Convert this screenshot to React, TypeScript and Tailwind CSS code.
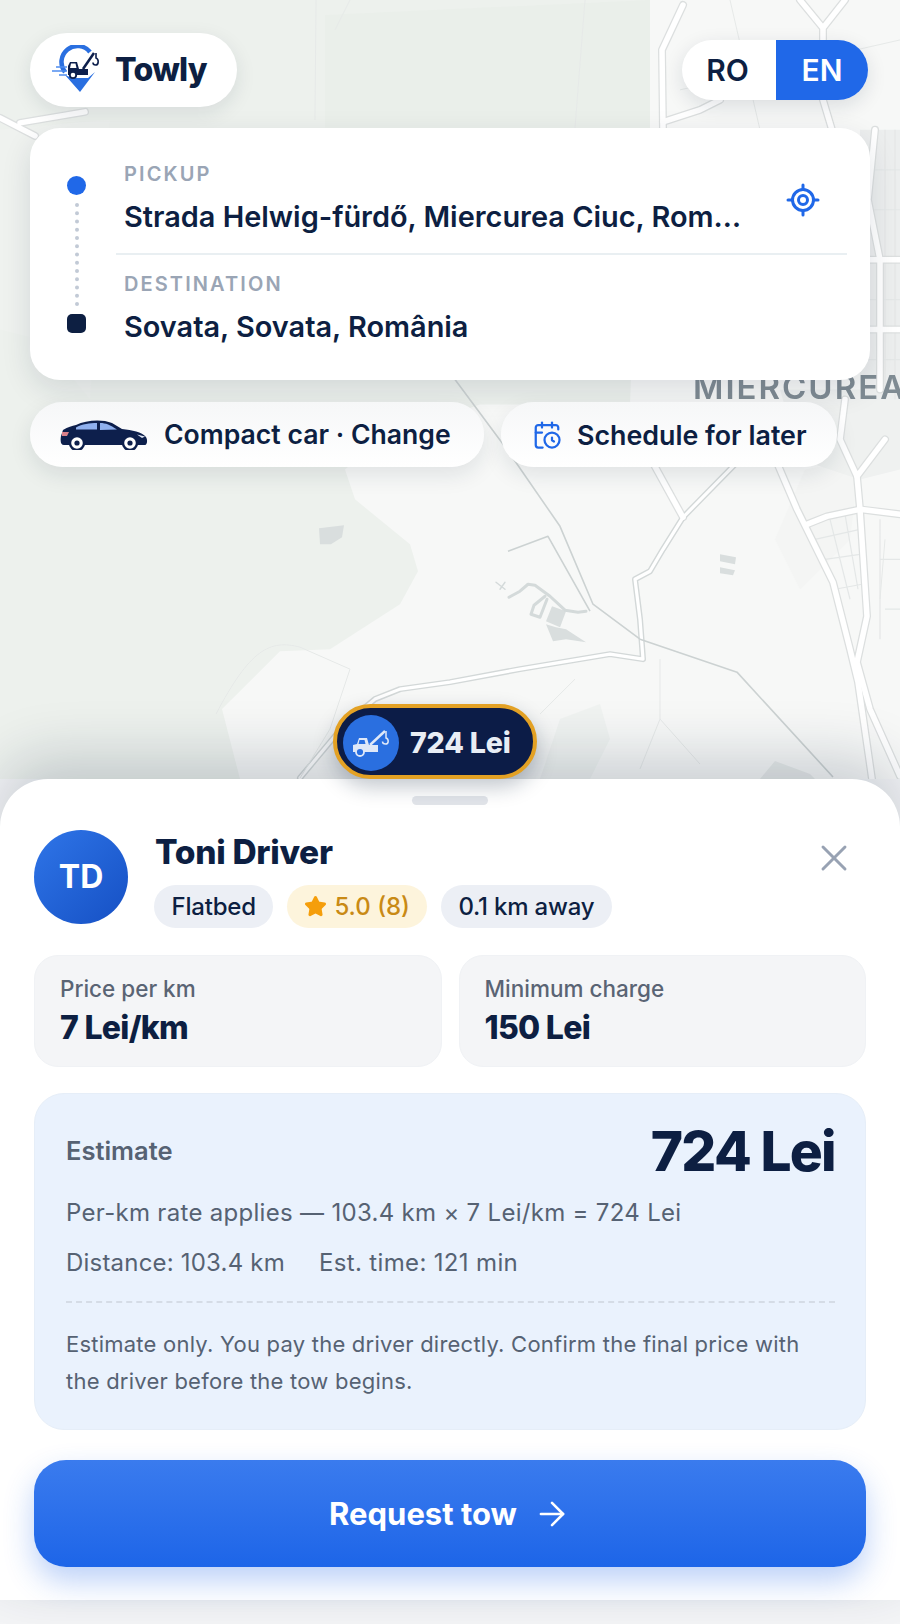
import { ArrowRight, CalendarClock, LocateFixed, Star, X } from "lucide-react";

const roads = [
  "M767 440L797 510L833 583L850 650L858 683L872 780",
  "M857 477L860 510L867 617L857 663L870 710L900 777",
  "M807 525L827 517L860 510L900 515",
  "M640 440L683 518",
  "M663 130L662 50L683 5",
  "M663 122L700 110L720 100",
  "M800 0L823 28L845 0M823 28V42M823 100L832 130",
  "M875 130L868 200L880 260L880 390M860 260H900M850 330H900",
  "M0 118L35 136M20 123L85 112",
  "M845 400L840 440L857 477L885 440",
];

const MapBackdrop = () => {
  return (
    <svg
      className="absolute inset-0 h-full w-full blur-[0.6px]"
      viewBox="0 0 900 780"
      preserveAspectRatio="none"
      fill="none"
    >
      <rect width="900" height="780" fill="#f7f8f7" />
      {/* woods */}
      <path
        d="M0 0H650V128H640L630 405H480L380 440L345 470L355 500L410 545L418 572L400 605L330 650L280 652L222 710L240 780H0Z"
        fill="#edf1ed"
      />
      <path d="M325 15L650 0V128H325Z" fill="#eaefea" />
      <path d="M0 130L110 120L90 400L40 340L0 330Z" fill="#eff2ef" />
      <path d="M540 780L560 720L600 705L610 740L590 780Z" fill="#f0f3f1" />
      <path d="M760 780L775 762L810 775L815 780Z" fill="#e8ebea" />
      <path d="M805 470L860 460L850 540L800 590L775 540Z" fill="#f4f5f4" />
      <path d="M780 390H900V470L860 480L800 460Z" fill="#eff1f0" />
      <path d="M860 130H900V400H860Z" fill="#eceeee" />
      {/* streets in town */}
      <g stroke="#e4e7e7" strokeWidth="1.2">
        <path d="M860 170H900M865 210H900M870 300H900M860 360H900M885 130V400M895 130V400" />
        <path d="M815 540L860 530M825 560L860 555M835 590L862 585M830 520L850 600M845 515L858 590M880 520V640M880 560H900M885 610H900" />
      </g>
      {/* white roads with a grey edge */}
      <g strokeLinecap="round" strokeLinejoin="round">
        <g stroke="#dcdfdf" strokeWidth="8">
          {roads.map((d) => (
            <path key={d} d={d} />
          ))}
        </g>
        <path
          stroke="#d3d8d8"
          strokeWidth="6"
          d="M760 440L733 467L683 518L663 550L650 572L635 580L640 620L643 660L610 655L520 670L450 683L400 690L375 700L345 725L300 779"
        />
        <g stroke="#ffffff" strokeWidth="5.5">
          {roads.map((d) => (
            <path key={d} d={d} />
          ))}
        </g>
        <path
          stroke="#ffffff"
          strokeWidth="3.2"
          d="M760 440L733 467L683 518L663 550L650 572L635 580L640 620L643 660L610 655L520 670L450 683L400 690L375 700L345 725L300 779"
        />
      </g>
      {/* thin tracks */}
      <g stroke="#ccd2d2" strokeWidth="1.6" strokeLinejoin="round">
        <path d="M455 380L507 450L560 527L593 605L640 640L737 673L833 778" />
        <path d="M508 552L548 537L590 612" />
      </g>
      <g stroke="#e6e9e8" strokeWidth="1">
        <path d="M660 660L660 720L700 765M660 720L640 770M575 680L540 715" />
        <path d="M680 90L900 40M760 130L730 0M885 540L880 600" />
        <path d="M216 715C250 650 270 640 300 648L350 670L330 730L300 779" />
        <path d="M585 0L575 128M350 0L335 30M316 0L315 120" />
      </g>
      {/* ponds and built-up patches */}
      <g fill="#d9dede">
        <path d="M319 529L344 526L342 538L331 545L320 545Z" />
        <path d="M546 625L556 628L566 630L586 643L566 640L553 642Z" />
        <path d="M552 607L566 612L560 628L546 622Z" />
        <path d="M720 555L736 558L735 565L720 562ZM720 568L735 571L733 576L720 574Z" />
      </g>
      <g stroke="#d4dada" strokeWidth="3" strokeLinecap="round" strokeLinejoin="round">
        <path d="M509 598L520 592L528 585L535 586L550 597L565 611L578 613L586 612" />
        <path d="M545 597L534 606L531 615L540 618L547 600" />
        <path d="M496 583L505 590M500 590L505 583" strokeWidth="1.4" />
      </g>
      <text
        x="693"
        y="400"
        fill="#7f8b93"
        fontFamily="Inter, sans-serif"
        fontSize="33"
        fontWeight="600"
        letterSpacing="2"
      >
        MIERCUREA
      </text>
    </svg>
  );
};

const TowlyLogo = () => {
  return (
    <svg width="50" height="50" viewBox="0 0 50 50" fill="none">
      <path d="M40 7A15.5 15.5 0 0 0 15 27" stroke="#2a6fe0" strokeWidth="4.5" />
      <path d="M15 30L30 47L45 27L38 33H22Z" fill="#2a6fe0" />
      <path d="M2 26H17M6 22H17M9 30H17" stroke="#4f8df0" strokeWidth="1.4" />
      <path d="M18 21L20 17H27L29 24H38V30H18Z" fill="#0d1f4c" />
      <path d="M21 18.5H25.5L26.5 23H20Z" fill="#ffffff" />
      <path d="M33 24L44 8" stroke="#0d1f4c" strokeWidth="2.6" />
      <path d="M46 8V13C49 14 49 20 45.5 20C44 20 43 19 43 17.5" stroke="#0d1f4c" strokeWidth="1.6" />
      <circle cx="23" cy="30" r="3.2" fill="#ffffff" stroke="#0d1f4c" strokeWidth="1.8" />
    </svg>
  );
};

const CarIcon = () => {
  return (
    <svg width="88" height="30" viewBox="0 0 88 30" fill="none">
      <path
        d="M3 10C8 7 12 6 16 5C26 0 42 -1 52 3L62 9C72 10 82 12 86 17C88 20 87 25 85 25H4C1 25 0 22 1 16Z"
        fill="#0d1f4c"
      />
      <path d="M16 7.5C22 4 30 3 37 3V9.5H16ZM40 3C46 3 50 5 57 9.5L40 10Z" fill="#8fb0ee" />
      <path d="M2 12H9L7 16H2Z" fill="#d9808a" />
      <path d="M77 14.5L85 16.5L82 18Z" fill="#dfe6f4" />
      <circle cx="17" cy="23" r="7" fill="#ffffff" stroke="#0d1f4c" strokeWidth="2.4" />
      <circle cx="17" cy="23" r="2.6" fill="#0d1f4c" />
      <circle cx="70" cy="23" r="7" fill="#ffffff" stroke="#0d1f4c" strokeWidth="2.4" />
      <circle cx="70" cy="23" r="2.6" fill="#0d1f4c" />
    </svg>
  );
};

const TowIcon = () => {
  return (
    <svg width="38" height="30" viewBox="0 0 38 30" fill="none">
      <path d="M7 10H15L17 17H26V24H1V17L5 16Z" fill="#dfe8f8" />
      <path d="M7.5 12H12.5L13.5 16H6.5Z" fill="#2a6fe0" />
      <path d="M18 17L33 3" stroke="#dfe8f8" strokeWidth="2.4" />
      <path d="M34 3V10C37 11 37 16 33.5 16C31.5 16 30.5 15 30.5 13.5" stroke="#dfe8f8" strokeWidth="1.5" />
      <circle cx="8" cy="24" r="4" fill="#2a6fe0" stroke="#dfe8f8" strokeWidth="1.8" />
    </svg>
  );
};

const Chip = ({ children }: { children: React.ReactNode }) => (
  <span className="flex h-[43px] items-center rounded-full bg-[#eceff5] px-[17.5px] text-[24px] font-medium tracking-[-0.2px] text-[#0d1f42]">
    {children}
  </span>
);

const Stat = ({ label, value }: { label: string; value: string }) => (
  <div className="h-[112px] flex-1 rounded-[24px] border border-[#f0f2f5] bg-[#f4f5f7] px-[25px] pt-[18px]">
    <p className="text-[22.5px] leading-[30px] font-medium text-[#5a6474]">{label}</p>
    <p className="mt-[5px] text-[32px] leading-[38px] font-extrabold tracking-[-0.7px] text-[#0d1f42]">{value}</p>
  </div>
);

export default function App() {
  return (
    <div className="relative h-[1624px] w-full overflow-hidden bg-[#f4f5f7] font-['Inter',sans-serif]">
      <div className="relative h-[779px] px-[30px] pt-[33px]">
        <MapBackdrop />

        <div className="relative flex items-start justify-between pr-[2px]">
          <div className="flex h-[74px] w-[207px] items-center gap-[15px] rounded-full bg-white pl-[20px] shadow-[0_6px_20px_rgba(15,35,60,0.1)]">
            <TowlyLogo />
            <span className="text-[32px] font-extrabold tracking-[-0.7px] text-[#0d1f42]">Towly</span>
          </div>
          <div className="mt-[7px] flex h-[60px] w-[186px] overflow-hidden rounded-full bg-white text-[30px] font-semibold shadow-[0_6px_20px_rgba(15,35,60,0.12)]">
            <span className="flex w-[94px] items-center justify-center pr-[3px] text-[#0d1f42]">RO</span>
            <span className="flex flex-1 items-center justify-center bg-[#2068e8] text-white">EN</span>
          </div>
        </div>

        <div className="relative mt-[21px] flex h-[252px] w-[840px] rounded-[30px] bg-white pr-[23px] shadow-[0_10px_30px_rgba(15,35,60,0.12)]">
          <div className="flex w-[86px] flex-col items-center pt-[48px] pl-[7px] pb-[47px]">
            <span className="h-[19px] w-[19px] rounded-full bg-[#2068e8]" />
            <span className="my-[8px] flex-1 border-l-[4px] border-dotted border-[#c2cad6]" />
            <span className="h-[19px] w-[19px] rounded-[5px] bg-[#0d1f42]" />
          </div>
          <div className="flex flex-1 flex-col">
            <div className="flex h-[127px] items-start justify-between border-b-2 border-[#e9eff2] pl-[8px]">
              <div>
                <p className="mt-[34px] text-[20px] leading-[24px] font-semibold tracking-[2.1px] text-[#9aa5b5]">PICKUP</p>
                <p className="mt-[11px] text-[28.9px] leading-[40px] font-semibold whitespace-nowrap text-[#0d1f42]">
                  Strada Helwig-fürdő, Miercurea Ciuc, Rom…
                </p>
              </div>
              <LocateFixed className="mt-[54px] mr-[26px] text-[#2068e8]" size={36} strokeWidth={2} />
            </div>
            <div className="pl-[8px]">
              <p className="mt-[17px] text-[20px] leading-[24px] font-semibold tracking-[2.1px] text-[#9aa5b5]">DESTINATION</p>
              <p className="mt-[11px] text-[28.9px] leading-[40px] font-semibold text-[#0d1f42]">
                Sovata, Sovata, România
              </p>
            </div>
          </div>
        </div>

        <div className="relative mt-[22px] flex gap-[17px]">
          <div className="flex h-[65px] w-[454px] items-center gap-[16px] rounded-full bg-gradient-to-b from-[#f6f7f8] to-white pl-[30px] text-[26.6px] font-semibold text-[#0d1f42] shadow-[0_8px_22px_rgba(15,35,60,0.1)]">
            <CarIcon />
            <span className="mt-[1px]">Compact car · Change</span>
          </div>
          <div className="flex h-[65px] w-[336px] items-center gap-[15px] rounded-full bg-gradient-to-b from-[#f6f7f8] to-white pl-[31px] text-[26.8px] font-semibold text-[#0d1f42] shadow-[0_8px_22px_rgba(15,35,60,0.1)]">
            <CalendarClock className="text-[#2068e8]" size={30} strokeWidth={1.8} />
            <span className="mt-[1px]">Schedule for later</span>
          </div>
        </div>

        <div className="absolute bottom-0 left-[333px] z-20 flex h-[75px] w-[204px] items-center gap-[11px] rounded-full border-[4px] border-[#e3a124] bg-[#0c1c47] pt-[2px] pl-[6px] shadow-[0_8px_20px_rgba(15,35,60,0.25)]">
          <span className="flex h-[56px] w-[56px] items-center justify-center rounded-full bg-[#2a6fe0]">
            <TowIcon />
          </span>
          <span className="mt-[2px] text-[28.6px] font-extrabold tracking-[-0.2px] text-[#e8edf5]">724 Lei</span>
        </div>
      </div>

      <div className="relative z-10 h-[821px] rounded-t-[48px] bg-white px-[34px] shadow-[0_-20px_60px_rgba(15,35,60,0.2)]">
        <div className="mx-auto h-[9px] w-[76px] translate-y-[17px] rounded-full bg-[#e2e5ea]" />

        <div className="mt-[42px] flex items-start">
          <div className="flex h-[94px] w-[94px] items-center justify-center rounded-full bg-gradient-to-br from-[#2f75e8] to-[#1650c4] text-[32px] font-bold text-white">
            TD
          </div>
          <div className="ml-[26px] flex-1">
            <p className="pl-[1px] text-[33.5px] leading-[44px] font-extrabold tracking-[-0.3px] text-[#0d1f42]">Toni Driver</p>
            <div className="mt-[11px] flex gap-[14px]">
              <Chip>Flatbed</Chip>
              <span className="flex h-[43px] items-center gap-[7px] rounded-full bg-[#fdf4dc] px-[17px] text-[24px] font-medium text-[#c98a15]">
                <Star className="fill-[#f59e0b] text-[#f59e0b]" size={23} />
                5.0 (8)
              </span>
              <Chip>0.1 km away</Chip>
            </div>
          </div>
          <X className="mt-[6px] mr-[10px] text-[#98a2b3]" size={44} strokeWidth={1.6} />
        </div>

        <div className="mt-[27px] flex gap-[17px]">
          <Stat label="Price per km" value="7 Lei/km" />
          <Stat label="Minimum charge" value="150 Lei" />
        </div>

        <div className="mt-[26px] h-[337px] rounded-[30px] border border-[#e6eef8] bg-[#eaf2fd] pr-[30px] pl-[31px] text-[#566273]">
          <div className="flex h-[80px] items-center justify-between pt-[34px]">
            <span className="text-[25.5px] font-semibold">Estimate</span>
            <span className="text-[55px] font-extrabold tracking-[-1.7px] text-[#0d1f42]">724 Lei</span>
          </div>
          <p className="mt-[21px] text-[24px] leading-[36px] tracking-[0.3px]">
            Per-km rate applies — 103.4 km × 7 Lei/km = 724 Lei
          </p>
          <div className="mt-[14px] flex gap-[34px] text-[24px] leading-[36px]">
            <span className="tracking-[0.2px]">Distance: 103.4 km</span>
            <span className="tracking-[0.35px]">Est. time: 121 min</span>
          </div>
          <div className="mt-[20px] border-t-2 border-dashed border-[#d5dce6]" />
          <p className="mt-[23px] text-[22px] leading-[37px] tracking-[0.23px]">
            Estimate only. You pay the driver directly. Confirm the final price with the driver before the tow begins.
          </p>
        </div>

        <div className="mt-[30px] flex h-[107px] items-center justify-center gap-[16px] rounded-[32px] bg-gradient-to-b from-[#3a7bee] to-[#1d65e8] text-white shadow-[0_14px_30px_rgba(32,104,232,0.3)]">
          <span className="mt-[1px] text-[31px] font-bold">Request tow</span>
          <ArrowRight size={38} strokeWidth={1.6} />
        </div>
      </div>
    </div>
  );
}
